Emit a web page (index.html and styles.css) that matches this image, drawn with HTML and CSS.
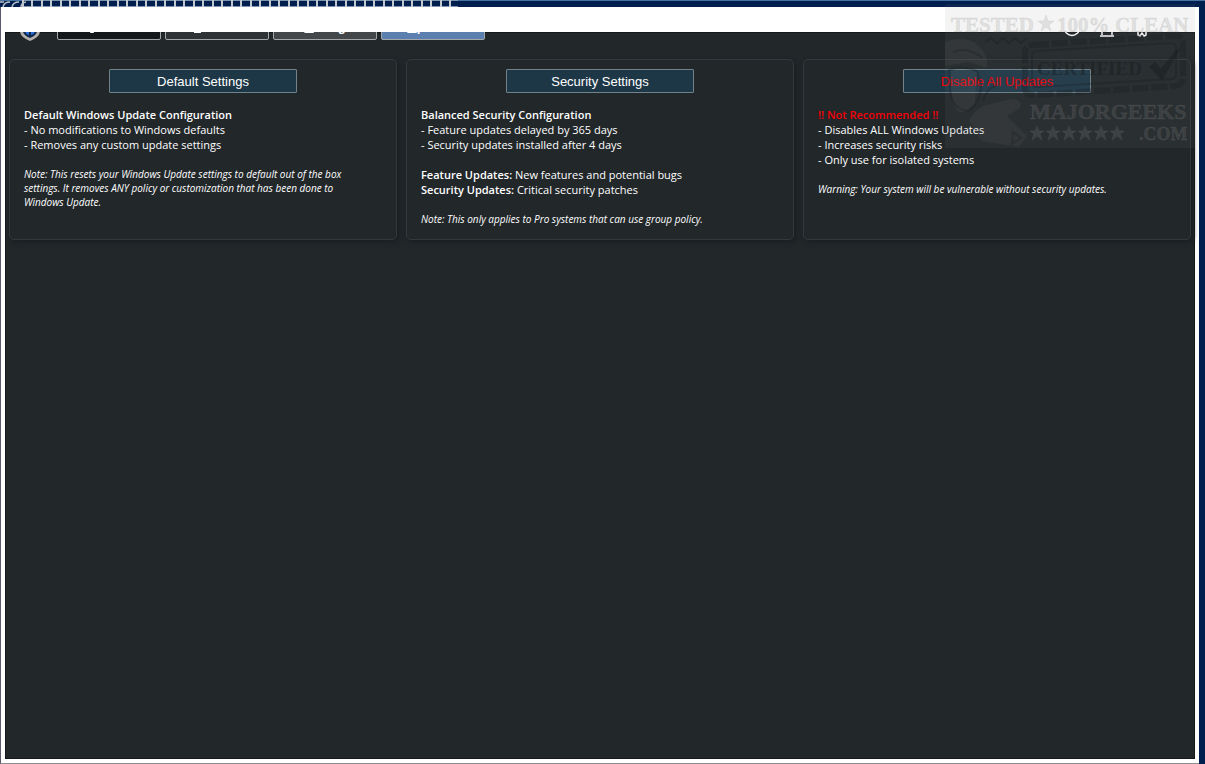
FILE: index.html
```html
<!DOCTYPE html>
<html lang="en">

<head>
    <meta charset="UTF-8">
    <title>Updates</title>
    <link rel="stylesheet" href="styles.css">
</head>

<body>

    <!-- Strip of the desktop above the window -->
    <svg class="desktop-strip" height="7" aria-hidden="true">
        <defs>
            <pattern id="ticks" x="3" width="19" height="7" patternUnits="userSpaceOnUse">
                <path d="M0 .5h19M0 6.5h19" stroke="#7f93ad" />
                <path d="M0 0h2v7h-2zM9 0h2v7h-2z" fill="#c3c8cf" />
            </pattern>
        </defs>
        <rect width="100%" height="1" fill="#47719f" />
        <rect x="22" width="436" height="7" fill="url(#ticks)" />
        <path d="M0 2h4M3 7q1-5 7-5M12 7q1-5 7-5M21 7q0-4 5-5" fill="none" stroke="#b9c0ca" stroke-width="1.5" />
    </svg>

    <div class="window">
        <div class="title-bar"></div>

        <div class="content">
            <header class="toolbar">
                <svg class="logo" width="22" height="26" viewBox="0 0 22 26" aria-hidden="true">
                    <path d="M11 1l10 4v10q0 6-10 10Q1 21 1 15V5z" fill="#b5b0aa" />
                    <path d="M11 4l7 3v8q0 4-7 7-7-3-7-7V7z" fill="#10294f" />
                    <path d="M6 9h4v10q-4-1-4-5zM12 9h4v5q0 4-4 5z" fill="#2f6fdb" />
                </svg>
                <nav class="tabs">
                    <button class="tab tab-install"><u>I</u>nstall</button>
                    <button class="tab tab-tweaks"><u>T</u>weaks</button>
                    <button class="tab tab-config"><u>C</u>onfig</button>
                    <button class="tab tab-updates"><u>U</u>pdates</button>
                </nav>
                <div class="tools">
                    <button class="tool" aria-label="Theme">
                        <svg width="18" height="18" viewBox="0 0 18 18"><circle cx="9" cy="9" r="7.5" /></svg>
                    </button>
                    <button class="tool" aria-label="Font size">
                        <svg width="18" height="18" viewBox="0 0 18 18"><path d="M4 16V5q5-5 10 0v11M2 17h14" /></svg>
                    </button>
                    <button class="tool" aria-label="Settings">
                        <svg width="18" height="18" viewBox="0 0 18 18"><path d="M5 12v4l2 1 2-3 2 3 2-1v-4M5 13l-2-4 3-6h6l3 6-2 4" /></svg>
                    </button>
                </div>
            </header>

            <main class="cards">
                <section class="card">
                    <button class="action">Default Settings</button>
                    <div class="text">
                        <p><strong>Default Windows Update Configuration</strong><br>
                            - No modifications to Windows defaults<br>
                            - Removes any custom update settings</p>
                        <p class="note">Note: This resets your Windows Update settings to default out of the box
                            settings. It removes ANY policy or customization that has been done to Windows Update.</p>
                    </div>
                </section>

                <section class="card">
                    <button class="action">Security Settings</button>
                    <div class="text">
                        <p><strong>Balanced Security Configuration</strong><br>
                            - Feature updates delayed by 365 days<br>
                            - Security updates installed after 4 days</p>
                        <p><strong>Feature Updates:</strong> New features and potential bugs<br>
                            <strong>Security Updates:</strong> Critical security patches</p>
                        <p class="note">Note: This only applies to Pro systems that can use group policy.</p>
                    </div>
                </section>

                <section class="card">
                    <button class="action danger">Disable All Updates</button>
                    <div class="text">
                        <p><strong class="danger">!! Not Recommended !!</strong><br>
                            - Disables ALL Windows Updates<br>
                            - Increases security risks<br>
                            - Only use for isolated systems</p>
                        <p class="note">Warning: Your system will be vulnerable without security updates.</p>
                    </div>
                </section>
            </main>
        </div>
    </div>

    <!-- Translucent stamp over the top right corner -->
    <svg class="stamp" width="250" height="144" viewBox="0 0 250 144">
        <rect class="stamp-back" width="250" height="144" />
        <g class="stamp-figure">
            <!-- head, hand and sleeve -->
            <path d="M0 38q20-8 34 4 10 10 8 22L24 58 0 62z" />
            <path d="M6 66q14-4 26 2l-2 30q-8 12-16 10Q4 100 6 66z" />
            <path d="M24 116q8-14 22-16l20-5q12 0 9 9l-13 8 20 20-8 11-38-6z" />
        </g>
        <g class="stamp-light">
            <text x="6" y="28" font-size="21">TESTED</text>
            <path d="M101 11l2 6h6l-5 4 2 6-5-4-5 4 2-6-5-4h6z" />
            <text x="112" y="28" font-size="21">100%</text>
            <text x="170" y="28" font-size="21">CLEAN</text>
            <text x="85" y="115" font-size="22">MAJORGEEKS</text>
            <text x="194" y="136" font-size="18">.COM</text>
            <path id="star" d="M92 122l2 5h5l-4 3 2 6-5-4-5 4 2-6-4-3h5z" />
            <use href="#star" x="16" />
            <use href="#star" x="32" />
            <use href="#star" x="48" />
            <use href="#star" x="64" />
            <use href="#star" x="80" />
        </g>
        <g class="stamp-dark">
            <path d="M40 38l6-4 6 5 6-5 6 5 6-5 6 5 6-5" />
            <path d="M88 41l142-9q8 0 8 8v34q0 7-8 8l-142 9q-8 0-8-8V49q0-7 8-8z" stroke-width="6" stroke-dasharray="16 3" />
            <path d="M92 47l134-8q5 0 5 5v26q0 5-5 5l-134 8q-5 0-5-5V52q0-5 5-5z" />
            <path d="M4 66q14-5 28 1l4 16q-2 20-14 24Q6 104 5 84z" />
            <path d="M8 48q14-6 30 6M38 97q2-11 14-16" />
            <path d="M68 128l8 6-9 6z" />
            <text x="92" y="71" font-size="19">CERTIFIED</text>
            <path class="solid" d="M204 63l6-5 6 7 14-18 6-3-19 32z" />
        </g>
    </svg>

</body>

</html>
```

FILE: styles.css
```css
* {
    box-sizing: border-box;
}

body {
    margin: 0;
    min-height: 100vh;
    display: flex;
    flex-direction: column;
    background-color: #001f4e;
    color: #fff;
    font-family: "Open Sans", "Noto Sans", sans-serif;
    font-size: 11px;
    line-height: 15px;
}

button {
    font-family: "Liberation Sans", Arial, sans-serif;
    font-size: 13px;
    color: #fff;
    cursor: pointer;
}

strong {
    font-weight: 600;
}

.desktop-strip {
    display: block;
    width: 100%;
    flex: none;
}

.window {
    flex: 1;
    display: flex;
    flex-direction: column;
    margin-right: 6px;
    padding: 0 4px 4px;
    background-color: #fff;
    border-left: 1px solid #5d596c;
    border-bottom: 1px solid #8c8c90;
}

.title-bar {
    height: 25px;
}

.content {
    flex: 1;
    background-color: #22272a;
    box-shadow: inset 0 0 0 1px #15181a;
}

/* Only the lower edge of the toolbar shows under the title bar */
.toolbar {
    display: flex;
    align-items: flex-end;
    height: 10px;
    padding: 0 44px 0 14px;
    overflow: hidden;
}

.logo {
    flex: none;
    margin-right: 16px;
}

.tabs {
    display: flex;
    gap: 4px;
    padding-bottom: 2px;
}

.tab {
    width: 104px;
    height: 27px;
    padding: 0;
    border: 1px solid #a4a7aa;
    border-radius: 2px;
    font-weight: bold;
}

.tab-install {
    background-color: #15181a;
}

.tab-tweaks {
    background-color: #303336;
}

.tab-config {
    background-color: #44474a;
}

.tab-updates {
    background-color: #5b80b0;
}

.tools {
    display: flex;
    gap: 17px;
    margin-left: auto;
    padding-bottom: 5px;
}

.tool {
    display: flex;
    padding: 0;
    border: 0;
    background: none;
}

.tool svg {
    fill: none;
    stroke: #fff;
    stroke-width: 1.5;
}

.cards {
    display: grid;
    grid-template-columns: repeat(3, 1fr);
    gap: 9px;
    padding: 17px 4px 0;
}

.card {
    padding: 9px 14px 13px;
    border: 1px solid #33383b;
    border-radius: 5px;
    box-shadow: 2px 2px 5px #1a1e20;
}

.action {
    display: block;
    width: 188px;
    height: 24px;
    margin: 0 auto 14px;
    padding: 0;
    background-color: #1e3747;
    border: 1px solid #71828b;
    border-radius: 1px;
}

.text p {
    margin: 0 0 15px;
}

.text .note {
    max-width: 330px;
    margin-bottom: 0;
    font-size: 10px;
    font-style: italic;
    line-height: 14px;
}

.danger {
    color: #f00008;
}

.stamp {
    position: absolute;
    top: 4px;
    right: 10px;
    pointer-events: none;
    font-family: "Liberation Serif", serif;
    font-weight: bold;
}

.stamp-back {
    fill: rgba(128, 128, 128, 0.09);
}

.stamp-figure {
    fill: rgba(140, 140, 140, 0.09);
}

.stamp-light {
    fill: rgba(140, 140, 140, 0.2);
    stroke: rgba(140, 140, 140, 0.12);
}

.stamp-dark {
    fill: none;
    stroke: rgba(20, 24, 26, 0.25);
    stroke-width: 2;
}

.stamp-dark text,
.stamp-dark .solid {
    fill: rgba(20, 24, 26, 0.4);
    stroke: none;
}
```
